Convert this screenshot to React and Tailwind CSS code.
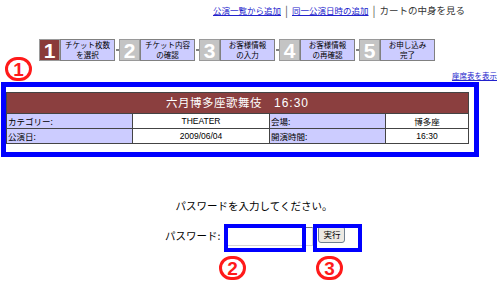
import React from 'react';

const jp = { fontFamily: '"Noto Sans CJK JP", "Noto Sans", sans-serif' };
const arial = { fontFamily: '"Liberation Sans", Arial, sans-serif' };

const steps = [
    { n: '1', a: 'チケット枚数', b: 'を選択', active: true },
    { n: '2', a: 'チケット内容', b: 'の確認' },
    { n: '3', a: 'お客様情報', b: 'の入力' },
    { n: '4', a: 'お客様情報', b: 'の再確認' },
    { n: '5', a: 'お申し込み', b: '完了' },
];

function Step({ step, last }) {
    return (
        <div className="flex items-center">
            <div
                className={
                    'w-[21px] h-[22px] flex items-center justify-center border border-[#9a9a9a] text-white font-bold text-[21px] leading-none ' +
                    (step.active ? 'bg-[#8a3a3a]' : 'bg-[#c4c4c4]')
                }
                style={arial}
            >
                {step.n}
            </div>
            <div className="w-[55px] h-[22px] border border-[#808080] bg-[#ccccff] flex flex-col items-center justify-center text-[7.5px] leading-[10px] text-black">
                <span>{step.a}</span>
                <span>{step.b}</span>
            </div>
            {!last && (
                <div className="w-[4px] flex items-center justify-center">
                    <div className="w-[3px] h-[2px] bg-[#808080]"></div>
                </div>
            )}
        </div>
    );
}

// red circled number used as an annotation marker
function Marker({ n, className }) {
    return (
        <div className={'absolute w-[27px] h-[24px] rounded-full border-[3px] border-[#ff1a1a] flex items-center justify-center text-[#ff1a1a] font-bold text-[19px] leading-none ' + className} style={arial}>
            {n}
        </div>
    );
}

export default function App() {
    return (
        <div className="w-[500px] h-[303px] bg-white relative overflow-hidden text-black" style={jp}>
            {/* top links */}
            <div className="h-[20px] flex items-center pl-[213px] pt-[1px]">
                <a className="text-[8.5px] text-[#2222cc] underline">公演一覧から追加</a>
                <span className="text-[11px] text-[#555] mx-[4px]">|</span>
                <a className="text-[8.5px] text-[#2222cc] underline">同一公演日時の追加</a>
                <span className="text-[11px] text-[#555] mx-[4px]">|</span>
                <span className="text-[9.5px] text-[#333]">カートの中身を見る</span>
            </div>

            {/* step bar */}
            <div className="mt-[19px] pl-[39px] flex">
                {steps.map((s, i) => (
                    <Step key={s.n} step={s} last={i === steps.length - 1} />
                ))}
            </div>

            <div className="flex justify-end pr-[3px] mt-[9px] h-[12px]">
                <a className="text-[7.5px] leading-[12px] text-[#2222cc] underline">座席表を表示</a>
            </div>

            {/* event table, framed */}
            <div className="ml-[1px] w-[478px] border-[5px] border-[#0000ff] pt-[5px] pr-[5px] pb-[8px]">
                <div className="w-[463px] border border-[#444]">
                    <div className="h-[21px] bg-[#8b3f3f] text-white text-[11.5px] flex items-center justify-center border-b border-[#444]">
                        <span className="tracking-[0.5px]">六月博多座歌舞伎</span>
                        <span className="ml-[12px] text-[12px] tracking-[1px]" style={arial}>16:30</span>
                    </div>
                    <div className="grid grid-cols-[126px_137px_116px_82px] text-[8.5px] leading-[14px]">
                        <div className="bg-[#ccccff] border-r border-b border-[#444] h-[15px] pl-[1px]">カテゴリー:</div>
                        <div className="border-r border-b border-[#444] h-[15px] text-center" style={arial}>THEATER</div>
                        <div className="bg-[#ccccff] border-r border-b border-[#444] h-[15px] pl-[1px]">会場:</div>
                        <div className="border-b border-[#444] h-[15px] text-center">博多座</div>
                        <div className="bg-[#ccccff] border-r border-[#444] h-[14px] pl-[1px]">公演日:</div>
                        <div className="border-r border-[#444] h-[14px] text-center" style={arial}>2009/06/04</div>
                        <div className="bg-[#ccccff] border-r border-[#444] h-[14px] pl-[1px]">開演時間:</div>
                        <div className="h-[14px] text-center" style={arial}>16:30</div>
                    </div>
                </div>
            </div>

            {/* password */}
            <div className="mt-[42px] text-center pl-[8px] text-[10.5px] leading-[14px]">
                パスワードを入力してください。
            </div>
            <div className="mt-[11px] pl-[165px] flex items-center h-[24px]">
                <span className="text-[10.5px]">パスワード:</span>
                <input
                    type="password"
                    className="ml-[6px] w-[87px] h-[19px] border border-[#7a7a7a] border-b-[#d4d4d4] border-r-[#d4d4d4] bg-white"
                />
                <button className="ml-[5px] w-[27px] h-[17px] text-[8.5px] leading-none bg-[#ece9e2] border border-[#6f7f8f] rounded-[3px] mb-[4px]">
                    実行
                </button>
            </div>

            {/* annotations */}
            <Marker n="1" className="left-[5px] top-[57px]" />
            <div className="absolute left-[224px] top-[224px] w-[82px] h-[28px] border-[4px] border-[#0000ff]"></div>
            <div className="absolute left-[313px] top-[224px] w-[49px] h-[28px] border-[4px] border-[#0000ff]"></div>
            <Marker n="2" className="left-[219px] top-[256px]" />
            <Marker n="3" className="left-[316px] top-[256px]" />
        </div>
    );
}
